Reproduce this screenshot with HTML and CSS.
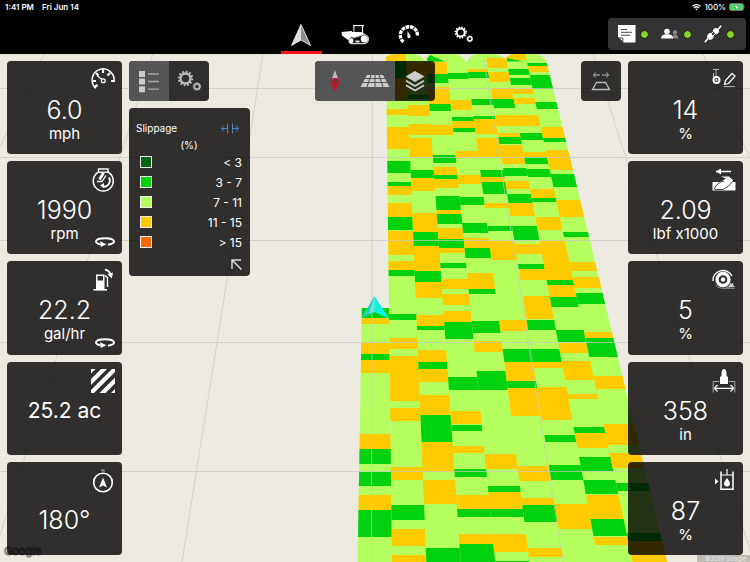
FILE: index.html
```html
<!DOCTYPE html>
<html lang="en">
<head>
<meta charset="utf-8">
<meta name="viewport" content="width=device-width, initial-scale=1">
<title>Field map</title>
<link rel="stylesheet" href="styles.css">
</head>
<body>
<svg width="0" height="0" class="defs" aria-hidden="true">
  <symbol id="gears" viewBox="0 0 24 24">
    <circle cx="8.5" cy="9.5" r="5" fill="none" stroke="currentColor" stroke-width="2.4"/>
    <circle cx="8.5" cy="9.5" r="6.8" fill="none" stroke="currentColor" stroke-width="2" stroke-dasharray="1.8 1.76"/>
    <circle cx="20" cy="17.5" r="2.7" fill="none" stroke="currentColor" stroke-width="1.7"/>
    <circle cx="20" cy="17.5" r="3.8" fill="none" stroke="currentColor" stroke-width="1" stroke-dasharray="1.2 1.19"/>
  </symbol>
  <symbol id="rotate" viewBox="0 0 20 10">
    <path d="M5.5 7.4C2.5 6.9 1 6 1 4.600 1 2.600 5 1.200 10 1.200s9 1.400 9 3.400c0 1.700-2.600 2.700-6 3.200" fill="none" stroke="currentColor" stroke-width="1.900"/>
    <path d="M5 4.300 11.500 7.200 5.800 10z" fill="currentColor"/>
  </symbol>
</svg>

<header class="header">
  <div class="status">
    <span>1:41 PM</span>
    <span>Fri Jun 14</span>
    <span class="status-right">
      <svg width="9" height="8" viewBox="0 0 9 8" fill="none" stroke="#fff" stroke-width="1.300"><path d="M.5 3.200a5.700 5.700 0 0 1 8 0M2 5a3.600 3.600 0 0 1 5 0"/><path d="M3.300 6 4.500 7.500 5.700 6Q4.500 5.200 3.300 6z" fill="#fff" stroke="none"/></svg>
      100%
      <svg width="17" height="8" viewBox="0 0 17 8"><rect x=".5" y=".5" width="14" height="7" rx="2" fill="#4cd964" stroke="#777"/><path d="M15.500 2.700q1.200 1.300 0 2.600z" fill="#999"/><path d="M8.600.8 4.700 4.600h2.500L6.400 7.300l3.900-3.900H7.800z" fill="#fff" stroke="#264" stroke-width=".4"/></svg>
    </span>
  </div>
  <div class="bar">
    <nav class="tabs" aria-label="Main">
      <button class="tab tab-active" aria-label="Map">
        <svg width="24" height="24" viewBox="0 0 24 24"><path d="M12 1.500 2.500 22.500 12 17z" fill="#ddd"/><path d="M12 1.500 21.500 22.500 12 17z" fill="#8e8e8e"/><path d="M12 1.500 2.500 22.500 12 17l9.500 5.500z" fill="none" stroke="#fff" stroke-width=".8"/></svg>
      </button>
      <button class="tab" aria-label="Vehicle">
        <svg width="30" height="24" viewBox="0 0 30 24"><path d="M1.500 9 12 8v5.500L8 17 2 12.500z" fill="#fff"/><path d="M12 9h9l4 2 2 3H9z" fill="#fff"/><path d="M14 10V3M22.500 10V3M13 2.700h11" stroke="#fff" stroke-width="1.200"/><path d="M14.600 3.500h7V9h-7z" fill="#111"/><path d="M11 15.500 24 11.500a4.200 4.200 0 0 1 0 9.100H11a2.600 2.600 0 0 1 0-5.100z" fill="#111" stroke="#ccc" stroke-width="1.200"/><circle cx="24.300" cy="16" r="3.600" fill="#fff"/><circle cx="11.300" cy="18" r="2.200" fill="#fff"/><path d="M15.500 18.500h4" stroke="#fff" stroke-width="1.800"/></svg>
      </button>
      <button class="tab" aria-label="Gauges">
        <svg width="24" height="24" viewBox="0 0 24 24"><path d="M6.500 19A8.600 8.600 0 1 1 20.500 13" fill="none" stroke="#fff" stroke-width="3.400" stroke-dasharray="3.600 .8"/><path d="m10.500 8 2.900 4.500a1.700 1.700 0 1 1-3 .3z" fill="#fff"/></svg>
      </button>
      <button class="tab" aria-label="Settings"><svg width="19" height="19"><use href="#gears"/></svg></button>
    </nav>
    <div class="statuses">
      <button class="state" aria-label="Work order">
        <svg width="18" height="18" viewBox="0 0 18 18"><path d="M0 0h17.500v17.500H5.500L0 12z" fill="#fff"/><path d="M.8 13h4v4z" fill="#fff" stroke="#333" stroke-width=".9"/><path d="M3 4.500h6M3 7.300h11M3 10.200h9" stroke="#333" stroke-width=".9"/></svg>
        <i class="dot"></i>
      </button>
      <button class="state" aria-label="Users">
        <svg width="18" height="18" viewBox="0 0 18 18"><circle cx="14" cy="7.500" r="2.200" fill="#888"/><path d="M11 13.500q0-3.800 3-3.800t3.500 3.800z" fill="#888"/><circle cx="6" cy="6.500" r="2.800" fill="#fff"/><path d="M0 13.500q.2-3.600 4-4.200h4q3.800.6 4 4.200z" fill="#fff"/></svg>
        <i class="dot"></i>
      </button>
      <button class="state" aria-label="Connection">
        <svg width="18" height="18" viewBox="0 0 18 18"><path d="M.8 17.200 4.500 13M13.500 5 17.200.8" stroke="#fff" stroke-width="1.600"/><path d="M3 12.300Q3 9.300 6.200 7.800l3.800 3.800Q8.500 15 5.500 15zM8.600 6Q9.600 2.800 12.700 3L15 5.300q.2 3.200-3 4.200z" fill="#fff"/><path d="m7 9 2-2M9 11l2-2" stroke="#fff"/></svg>
        <i class="dot"></i>
      </button>
    </div>
  </div>
</header>

<main class="screen">
  <svg class="map" id="map" viewBox="0 54 750 508" preserveAspectRatio="xMidYMin slice" role="img" aria-label="Slippage coverage map">
    <defs><clipPath id="field"><path d="M340 600V308H386V57Q390 54 396 54H414Q421 55 425 61L428 55Q434 53 448 53 462 53 466 63 470 53 484 53 499 53 505 59L508 56Q514 53 530 53 540 53 546 60L680 600z"/></clipPath></defs>
    <g id="coverage" clip-path="url(#field)"></g>
    <path class="green" d="M427 59 430 55 445 61.500H428zM507 58 524 61.500H507z"/>
    <g class="grid">
      <path d="M0 88.500H750M0 157.500H750M0 240.500H750M0 342.500H750M0 471.500H750"/>
      <path d="M372.500 54 371.500 562M263 54 182 562M153 54 0 535M44 54 0 147M483 54 563 562M593 54 754 562M703 54 751 160"/>
    </g>
    <path d="M374.500 296 361.500 318 374.500 312z" fill="#28cfc0"/>
    <path d="M374.500 296 389 318.500 374.500 312z" fill="#08f4e6"/>
    <path d="M374.500 296 369 313.500 374.500 312z" fill="#5ee9e0"/>
  </svg>
  <span class="brand">Google</span>
  <span class="credit">©2019 Google</span>

  <section class="tiles" aria-label="Machine">
    <article class="tile">
      <svg class="icon" viewBox="0 0 24 24" fill="none" stroke="currentColor"><path d="M5 20.300A11 11 0 1 1 23 13.500" stroke-width="1.500"/><path d="M2.800 19.500 6.500 17M23.800 13H20M1.500 13H5M5 5l2.500 2.500M12 1.500V5M19 5l-2.500 2.500" stroke-width="2.200"/><path d="M6 7.500 11 11.500" stroke-width="1.200"/><circle cx="12.300" cy="12.700" r="1.900" stroke-width="1.300"/></svg>
      <strong class="value">6.0</strong><span class="unit">mph</span>
    </article>
    <article class="tile">
      <svg class="icon" viewBox="0 0 24 24" fill="none" stroke="currentColor"><path d="M7.500 4.200A10 10 0 1 0 17 4.200V1H7.500z" stroke-width="1.500"/><path d="M7.500 4.200H17" stroke-width="1.300"/><path d="M12.500 5 8.500 11.500" stroke-width="2.800"/><path d="M6 13.500H11L15 7.500" stroke-width="1.300"/><path d="M18 9.500A6 6 0 0 1 12 18.500" stroke-width="1.800"/><path d="M9 17.500 13 15v5z" fill="currentColor" stroke="none"/></svg>
      <strong class="value">1990</strong><span class="unit">rpm</span>
      <svg class="turn"><use href="#rotate"/></svg>
    </article>
    <article class="tile">
      <svg class="icon" viewBox="0 0 24 24" fill="none" stroke="currentColor"><path d="M5 6.500h8.500V21H5z" fill="currentColor" stroke="none"/><path d="M6.500 8h5.500v4.500H6.500z" fill="#2f2f2d" stroke="none"/><path d="M2.500 21.800H16" stroke-width="1.600"/><path d="M14 7.500 16.500 9.500V19" stroke-width="1.400"/><path d="M14 1.500Q19 2.500 20 8" stroke-width="2"/><path d="M16.500 6.500 22 4.500 20.800 10.500z" fill="currentColor" stroke="none"/></svg>
      <strong class="value">22.2</strong><span class="unit">gal/hr</span>
      <svg class="turn"><use href="#rotate"/></svg>
    </article>
    <article class="tile">
      <svg class="icon" viewBox="0 0 24 24" fill="currentColor"><path d="M0 0h4.500L0 4.500zM10 0h6L0 16v-6zM21 0h3v3L3 24H0v-3zM24 8.500v6L14.500 24h-6zM24 20v4h-4z"/></svg>
      <strong class="value value-inline">25.2 ac</strong>
    </article>
    <article class="tile tile-low">
      <svg class="icon" viewBox="0 0 24 24" fill="none" stroke="currentColor"><circle cx="12" cy="13.500" r="9.300" stroke-width="1.600"/><path d="M12 8.500 16 18.500 12 16.500 8 18.500z" fill="currentColor" stroke="none"/><path d="M11 2.500V.5l2 2V.5" stroke-width=".6"/></svg>
      <strong class="value">180°</strong>
    </article>
  </section>

  <section class="center" aria-label="Map tools">
    <div class="tools">
      <div class="group">
        <button class="tool tool-on" aria-label="Legend"><svg width="22" height="24" viewBox="0 0 22 24"><path d="M1 2h6v6H1zM1 9.500h6v6H1zM1 17.200h6v6H1z" fill="#ccc"/><path d="M10 5h11M10 12.500h11M10 20.200h11" stroke="#aaa" stroke-width="1.300"/></svg></button>
        <button class="tool" aria-label="Layer settings"><svg width="24" height="24"><use href="#gears"/></svg></button>
      </div>
      <div class="group">
        <button class="tool tool-on" aria-label="North up"><svg width="12" height="24" viewBox="0 0 12 24"><path d="M6 1 10 12.500a4 3.500 0 0 0-8 0z" fill="#bbb"/><path d="M2 12.500a4 3.500 0 0 1 8 0L6 23z" fill="#d01028"/><circle cx="6" cy="12" r="2" fill="#4a4a4a"/></svg></button>
        <button class="tool tool-on" aria-label="Perspective"><svg width="30" height="14" viewBox="0 0 30 14"><path d="M7 1h16l6.500 12H.5z" fill="#ccc"/><path d="M4.500 4.500h21M3 8.500h25M11 1 7 13M15 1v12M19 1l4 12" stroke="#555" stroke-width="1.100"/></svg></button>
        <button class="tool" aria-label="Layers"><svg width="20" height="22" viewBox="0 0 20 22"><path d="M10 1 19.500 6.500 10 12 .5 6.500z" fill="#ccc"/><path d="M1 10.800 10 16l9-5.200M1 15.300l9 5.200 9-5.200" fill="none" stroke="#ccc" stroke-width="1.900"/></svg></button>
      </div>
      <div class="group">
        <button class="tool" aria-label="Swath width"><svg width="20" height="20" viewBox="0 0 20 20" fill="none" stroke="#bbb"><path d="M3 4H9M4.500 1.500 2.500 4l2 2.500M11 4h6M15.500 1.500l2 2.500-2 2.500"/><path d="M5.500 11.500h9L18.500 18.500h-17z" stroke-width="1.300"/></svg></button>
      </div>
    </div>
    <aside class="legend">
      <div class="legend-head"><h2 class="legend-title">Slippage</h2>
        <button class="plain" aria-label="Resize legend"><svg width="20" height="11" viewBox="0 0 20 11" fill="none" stroke="#4b84c6"><path d="M7.500.5v10M12.500.5v10M7 5.500H1.500M4 2.500l-2.500 3 2.500 3M13 5.500h5.500M16 2.500l2.500 3-2.500 3"/></svg></button>
      </div>
      <p class="legend-unit">(%)</p>
      <ul class="legend-list">
        <li class="legend-row"><i class="swatch swatch-a"></i>&lt; 3</li>
        <li class="legend-row"><i class="swatch swatch-b"></i>3 - 7</li>
        <li class="legend-row"><i class="swatch swatch-c"></i>7 - 11</li>
        <li class="legend-row"><i class="swatch swatch-d"></i>11 - 15</li>
        <li class="legend-row"><i class="swatch swatch-e"></i>&gt; 15</li>
      </ul>
      <button class="plain legend-fold" aria-label="Collapse legend"><svg width="11" height="11" viewBox="0 0 11 11" fill="none" stroke="#ddd" stroke-width="1.500"><path d="M1 10V1h9M1.500 1.500l9 9"/></svg></button>
    </aside>
  </section>

  <section class="tiles" aria-label="Implement">
    <article class="tile">
      <svg class="icon" viewBox="0 0 24 24" fill="none" stroke="currentColor"><path d="M1 1.500h6M4 1.500V8" stroke="#bbb"/><path d="M1.500 5v8" stroke="#bbb"/><circle cx="4.500" cy="12" r="3" stroke-width="2"/><circle cx="4.500" cy="12" r="1" fill="currentColor" stroke="none"/><path d="M12.500 16.500 13.500 12.500 20 5.500 23 8 16.500 15.500z" stroke-width="1.200" stroke-linejoin="round"/><path d="M11.500 18.600H23" stroke="#bbb"/></svg>
      <strong class="value">14</strong><span class="unit">%</span>
    </article>
    <article class="tile">
      <svg class="icon" viewBox="0 0 24 24" fill="none" stroke="currentColor"><path d="M4 3.500H19" stroke-width="1.600"/><path d="M4 3.500 9 .5v6z" fill="currentColor" stroke="none"/><path d="M.5 14H8Q13 11 14 10.500L9 8.500H17L21 12 20 14h3.500v8.500H.5z" fill="currentColor" stroke="none"/><path d="M2 21Q5 14.500 12 13M2.500 21.500H11Q17 19 20 14" stroke="#2f2f2d" stroke-width=".9"/></svg>
      <strong class="value">2.09</strong><span class="unit">lbf x1000</span>
    </article>
    <article class="tile">
      <svg class="icon" viewBox="0 0 24 24" fill="none" stroke="currentColor"><path d="M1 13A10 9.500 0 0 1 20 8" stroke-width="1.300"/><circle cx="11" cy="11.500" r="6" stroke-width="3.300"/><circle cx="11" cy="11.500" r="2.200" fill="currentColor" stroke="none"/><path d="M13 19.500 17 18 18.500 14.500 20 16l1-1.500.5 3 1.500 1.500z" fill="#ccc" stroke="none"/><path d="M3.500 17Q6 20.500 11 20.300h12" stroke="#aaa" stroke-width=".8"/></svg>
      <strong class="value">5</strong><span class="unit">%</span>
    </article>
    <article class="tile">
      <svg class="icon" viewBox="0 0 24 24" fill="none" stroke="currentColor"><path d="M9.500 5Q9.500 0 12 0t2.500 5v2l1.500 1v7H8V8l1.500-1z" fill="currentColor" stroke="none"/><path d="M1.200 23.500V12.500h6M22.800 23.500V12.500h-6" stroke="#aaa"/><path d="M3 19.300h18M5.500 16 2.500 19.300l3 3.200M18.500 16l3 3.300-3 3.200" stroke-width="1.200"/></svg>
      <strong class="value">358</strong><span class="unit">in</span>
    </article>
    <article class="tile">
      <svg class="icon" viewBox="0 0 24 24" fill="none" stroke="currentColor"><path d="M9 2.500V20.200H21V2.500" stroke-width="1.500"/><path d="M15 0V6M9 6h12" stroke-width="1.200"/><path d="M15 9Q18 13 18 14.500a3 3 0 0 1-6 0Q12 13 15 9zM3 9.500 6.500 12.500 3 15.500z" fill="currentColor" stroke="none"/></svg>
      <strong class="value">87</strong><span class="unit">%</span>
    </article>
  </section>
</main>
<script src="map.js"></script>
</body>
</html>
```

FILE: styles.css
```css
* { box-sizing: border-box; }
body {
  margin: 0;
  min-height: 100vh;
  display: flex;
  flex-direction: column;
  background: #000;
  color: #fff;
  font-family: Inter, "Liberation Sans", sans-serif;
}
button { margin: 0; padding: 0; border: 0; background: none; color: inherit; font: inherit; }
svg { display: block; }
.defs { position: absolute; }

.status { display: flex; align-items: center; gap: 8px; height: 14px; padding: 0 4px 0 5px; font-size: 8px; font-weight: 600; }
.status-right { display: flex; align-items: center; gap: 3px; margin-left: auto; font-weight: 500; }
.bar { display: grid; grid-template-columns: 1fr auto 1fr; height: 40px; padding: 0 4px 0 18px; }
.tabs { grid-column: 2; display: flex; gap: 13px; }
.tab { display: flex; align-items: center; justify-content: center; width: 41px; border-bottom: 3px solid transparent; padding-top: 4px; }
.tab-active { border-color: #f01414; }
.statuses { justify-self: end; align-self: start; display: flex; align-items: center; gap: 12px; height: 32px; margin-top: 4px; padding: 0 11px 0 10px; border-radius: 4px; background: #333; }
.state { display: flex; align-items: center; gap: 4px; }
.dot { width: 9px; height: 9px; border: 1px solid #111; border-radius: 50%; background: #84d62c; }

.screen { position: relative; flex: 1; display: flex; gap: 7px; padding: 7px; overflow: hidden; background: #edeae2; }
.map { position: absolute; inset: 0; width: 100%; height: 100%; }
.grid { fill: none; stroke: #cbc7c4; stroke-opacity: .7; }
.lime { fill: #b4ff5e; }
.green { fill: #00d20f; }
.amber { fill: #ffcb00; }
.brand { position: absolute; left: 4px; bottom: 4px; color: #ddd; font-size: 11px; -webkit-text-stroke: 1px #888; }
.credit { position: absolute; right: 0; bottom: 0; padding: 0 4px 0 8px; background: #bdbbb5; color: #eee; font-size: 6px; line-height: 7px; }

.tiles { position: relative; display: grid; grid-auto-rows: 1fr; gap: 7px; width: 115px; }
.tile { position: relative; display: flex; flex-direction: column; align-items: center; padding-top: 34px; border-radius: 4px; background: rgba(0, 0, 0, .8); }
.tile-low { padding-top: 43px; }
.value { font-size: 25px; font-weight: 300; line-height: 30px; }
.value-inline { font-size: 21px; font-weight: 400; }
.unit { font-size: 15px; line-height: 18px; }
.icon { position: absolute; top: 7px; right: 7px; width: 24px; height: 24px; }
.turn { position: absolute; right: 7px; bottom: 7px; width: 20px; height: 10px; }

.center { position: relative; flex: 1; display: flex; flex-direction: column; gap: 7px; }
.tools { display: grid; grid-template-columns: 1fr auto 1fr; }
.group { display: flex; justify-self: start; border-radius: 4px; overflow: hidden; background: rgba(0, 0, 0, .8); color: #bbb; }
.group:last-child { justify-self: end; }
.tool { display: flex; align-items: center; justify-content: center; width: 40px; height: 40px; }
.tool-on { background: #555; }

.legend { align-self: flex-start; width: 121px; padding: 10px 8px 6px 7px; border-radius: 4px; background: rgba(0, 0, 0, .8); font-size: 12px; }
.legend-head { display: flex; align-items: center; justify-content: space-between; height: 20px; padding-right: 2px; }
.legend-title { margin: 0; font-size: 10px; font-weight: 400; }
.legend-unit { margin: 0; font-size: 10px; line-height: 14px; text-align: center; }
.legend-list { margin: 0; padding: 0; list-style: none; }
.legend-row { display: flex; align-items: center; justify-content: space-between; height: 20px; padding-left: 4px; }
.swatch { width: 12px; height: 12px; border: 1px solid #eee; }
.swatch-a { background: #006414; }
.swatch-b { background: #00d20f; }
.swatch-c { background: #b4ff5e; }
.swatch-d { background: #ffcb00; }
.swatch-e { background: #ff6a00; }
.legend-fold { display: block; margin: 7px 0 0 auto; }
```

FILE: map.js
```javascript
// Each swath lists its passes as [colour, near edge, far edge]; gaps are lime.
const swaths = [
  "g308-318 a318-324 a343-354 g354-360 a360-373 a434-449 g449-464 g472-486 a495-510 g510-537",
  "a53-61 g61-78 a78-100 a109-115 a127-149 g161-173 g182-186 a186-195 a203-217 g217-230 a231-255 a261-270 g270-276 g314-320 a338-349 a356-401 a408-421 a467-480 g505-520 a529-546 a555-564",
  "a61-78 g95-99 a105-116 a124-135 a138-157 g170-178 a178-191 a213-232 g232-246 a246-271 g271-282 a282-298 a315-326 g326-330 a350-362 g362-369 a369-382 a395-415 g415-442 a442-472 a480-504 g548-564",
  "a62-74 g74-83 a87-104 g104-111 a125-135 g155-163 a167-175 g175-179 a179-188 g196-210 a210-214 g214-224 a228-239 g239-248 a248-253 g263-268 a279-289 a294-305 a311-322 g322-339 g377-390 a411-424 g425-431 a446-453 g469-477 a495-509 g509-517 a534-544 g544-564",
  "g73-79 a100-110 g117-121 a121-128 g128-132 a151-158 a175-184 g197-205 g223-233 a238-248 g248-258 a273-289 g289-294 g321-333 a341-352 g371-390 a454-469 g486-492 a492-509 g509-517 a534-552 g561-564",
  "a69-72 g72-78 g99-105 g116-119 a119-134 a138-157 g170-177 a177-182 g182-194 a203-208 g226-231 a241-260 a320-331 g349-362 a362-381 g381-388 a388-416 a466-481 a498-505 g505-522 a548-557",
  "a58-68 a72-82 a88-99 g99-108 a115-126 a133-137 g137-144 a145-164 g168-176 a181-189 g194-203 a203-216 g226-240 a244-254 g264-269 a269-280 a296-319 g320-330 g349-362 a362-368 a387-420 g435-442 g465-480 a504-529",
  "a53-60 g69-75 g78-85 a89-94 a98-104 a115-126 g133-140 a152-157 g157-164 g169-177 a189-198 g198-202 a217-230 a241-280 g280-285 a285-297 g297-307 g330-342 a343-353 a361-380 a394-399 g427-433 a433-448 g457-471 g480-494 a495-519 g519-536 a537-545",
  "g63-66 a66-72 g75-89 g102-109 a127-138 g138-142 a150-170 g174-187 a200-217 g232-237 a262-271 a277-288 g293-304 a332-338 g338-357 a376-389 a424-445 a453-468 g483-491 g533-541 a541-564"
];
const classes = { l: "lime", g: "green", a: "amber" };
const layer = document.getElementById("coverage");

// Horizontal position of swath edge n at depth y.
function edge(n, y) {
  const d = y - 54;
  return (386 + d * 0.0118 + n * (19.9 + d * 0.0285)).toFixed(2);
}

function cell(n, kind, top, bottom) {
  const shape = document.createElementNS("http://www.w3.org/2000/svg", "polygon");
  shape.setAttribute("class", classes[kind]);
  shape.setAttribute("points", [
    [edge(n, top), top], [edge(n + 1, top), top],
    [edge(n + 1, bottom), bottom], [edge(n, bottom), bottom]
  ].join(" "));
  layer.appendChild(shape);
}

cell(-1, "l", 308, 800);
const base = document.createElementNS("http://www.w3.org/2000/svg", "polygon");
base.setAttribute("class", classes.l);
base.setAttribute("points", `${edge(0, 50)},50 ${edge(8, 50)},50 ${edge(8, 800)},800 ${edge(0, 800)},800`);
layer.appendChild(base);

swaths.forEach((passes, i) => {
  passes.split(" ").forEach(pass => {
    const [top, bottom] = pass.slice(1).split("-").map(Number);
    cell(i - 1, pass[0], top, bottom);
  });
});
```
